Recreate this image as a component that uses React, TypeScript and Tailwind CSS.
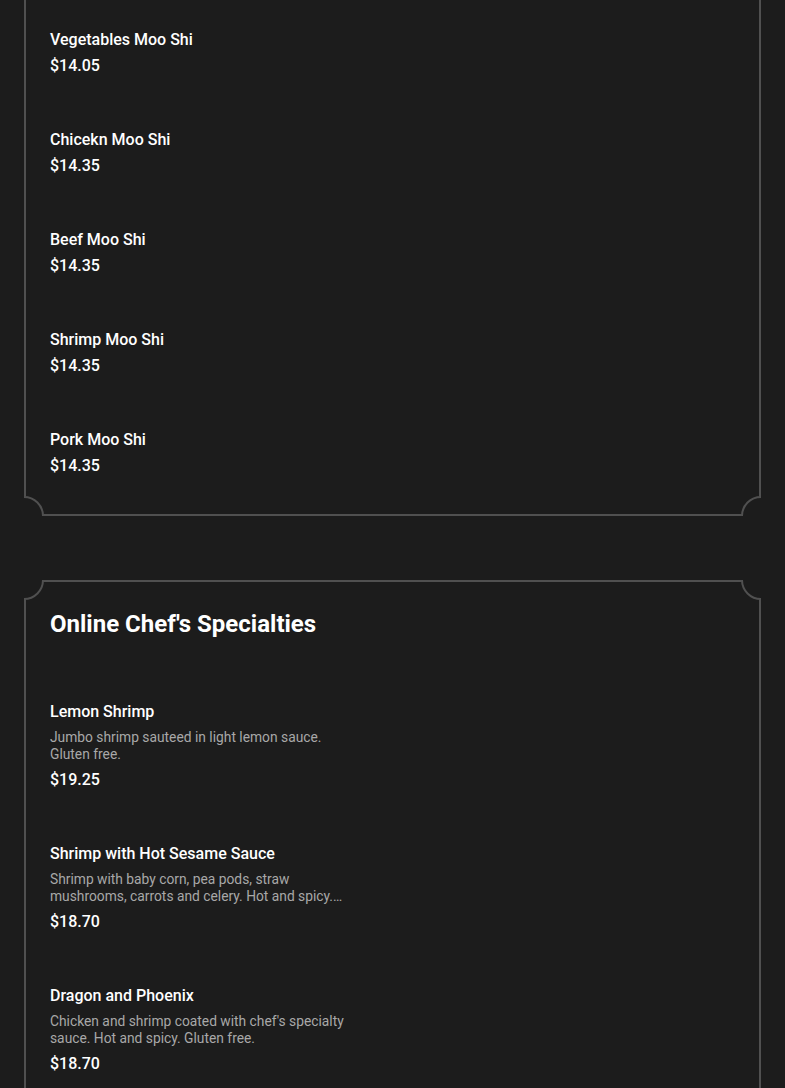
import React from "react";

type Item = { name: string; price: string; desc?: string };

const mooShi: Item[] = [
  { name: "Vegetables Moo Shi", price: "$14.05" },
  { name: "Chicekn Moo Shi", price: "$14.35" },
  { name: "Beef Moo Shi", price: "$14.35" },
  { name: "Shrimp Moo Shi", price: "$14.35" },
  { name: "Pork Moo Shi", price: "$14.35" },
];

const chef: Item[] = [
  {
    name: "Lemon Shrimp",
    desc: "Jumbo shrimp sauteed in light lemon sauce. Gluten free.",
    price: "$19.25",
  },
  {
    name: "Shrimp with Hot Sesame Sauce",
    desc: "Shrimp with baby corn, pea pods, straw mushrooms, carrots and celery. Hot and spicy. Gluten free.",
    price: "$18.70",
  },
  {
    name: "Dragon and Phoenix",
    desc: "Chicken and shrimp coated with chef's specialty sauce. Hot and spicy. Gluten free.",
    price: "$18.70",
  },
  {
    name: "General Tso's Chicken",
    desc: "Crispy chunks of chicken in chef's special sauce. Hot and spicy.",
    price: "$17.60",
  },
];

function Corners() {
  return (
    <>
      <div className="absolute -top-[2px] -left-[2px] w-5 h-5 overflow-hidden">
        <div className="absolute -top-5 -left-5 w-10 h-10 rounded-full bg-[#1c1c1c] border-2 border-[#505050]" />
      </div>
      <div className="absolute -top-[2px] -right-[2px] w-5 h-5 overflow-hidden">
        <div className="absolute -top-5 -right-5 w-10 h-10 rounded-full bg-[#1c1c1c] border-2 border-[#505050]" />
      </div>
      <div className="absolute -bottom-[2px] -left-[2px] w-5 h-5 overflow-hidden">
        <div className="absolute -bottom-5 -left-5 w-10 h-10 rounded-full bg-[#1c1c1c] border-2 border-[#505050]" />
      </div>
      <div className="absolute -bottom-[2px] -right-[2px] w-5 h-5 overflow-hidden">
        <div className="absolute -bottom-5 -right-5 w-10 h-10 rounded-full bg-[#1c1c1c] border-2 border-[#505050]" />
      </div>
    </>
  );
}

function MenuItem({ item }: { item: Item }) {
  return (
    <div className="flex flex-col w-[300px]">
      <div className="text-[16px] leading-[24px] font-medium text-white">{item.name}</div>
      {item.desc && (
        <div className="mt-[5px] text-[13.8px] leading-[17px] text-[#a8a8a8] line-clamp-2">
          {item.desc}
        </div>
      )}
      <div className={`${item.desc ? "mt-[5px]" : "mt-[2px]"} text-[16px] leading-[24px] font-medium text-white`}>
        {item.price}
      </div>
    </div>
  );
}

export default function App() {
  return (
    <div
      className="min-h-screen bg-[#1c1c1c] px-6 overflow-hidden"
      style={{ fontFamily: "Roboto, 'Noto Sans', sans-serif" }}
    >
      <div className="relative -mt-[60px] border-2 border-[#505050] px-6 pt-[86px] pb-[36px]">
        <Corners />
        <div className="flex flex-col gap-[50px]">
          {mooShi.map((it) => (
            <MenuItem key={it.name} item={it} />
          ))}
        </div>
      </div>
      <div className="relative mt-16 border-2 border-[#505050] px-6 pt-[26px] pb-[40px]">
        <Corners />
        <h2 className="text-[24px] leading-[32px] font-bold text-white">Online Chef's Specialties</h2>
        <div className="mt-[60px] flex flex-col gap-[50px]">
          {chef.map((it) => (
            <MenuItem key={it.name} item={it} />
          ))}
        </div>
      </div>
    </div>
  );
}
